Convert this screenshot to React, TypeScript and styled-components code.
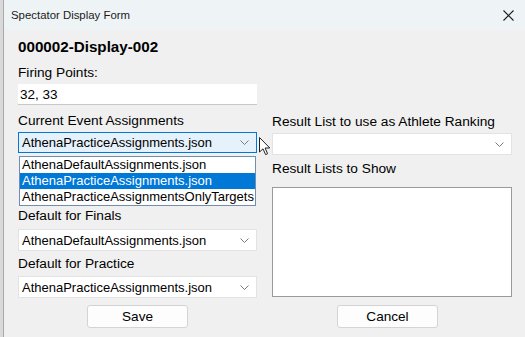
import React from 'react';
import styled, {createGlobalStyle} from 'styled-components';

const GlobalStyle = createGlobalStyle`
  html, body {
    margin: 0;
    padding: 0;
    background: #d9d9d9;
    font-family: "Liberation Sans", Arial, sans-serif;
  }
`;

const Window = styled.div`
  margin-left: 3px;
  width: 522px;
  height: 337px;
  background: #f0f0f0;
  border-left: 1px solid #a9a9a9;
  box-sizing: border-box;
  display: flex;
  flex-direction: column;
  overflow: hidden;
`;

const TitleBar = styled.div`
  height: 30px;
  flex-shrink: 0;
  background: #eef3f6;
  display: flex;
  align-items: center;
  justify-content: space-between;
  padding: 0 11px 0 7px;
  font-size: 11.4px;
  color: #1a1a1a;
`;

const Body = styled.div`
  padding: 8px 13px 0 14px;
  display: flex;
  flex-direction: column;
  color: #000;
  font-size: 13px;
`;

const Heading = styled.div`
  font-weight: bold;
  font-size: 15.2px;
  line-height: 18px;
  margin-bottom: 9px;
`;

const Label = styled.div<{$gap?: number}>`
  font-size: 13.7px;
  line-height: 16px;
  margin-bottom: ${p => p.$gap ?? 3}px;
`;

const TextBox = styled.div`
  width: 239px;
  height: 21px;
  box-sizing: border-box;
  background: #fff;
  border-bottom: 1px solid #c8c8c8;
  padding: 3px 2px;
  line-height: 15px;
  font-size: 13.5px;
  margin-bottom: 8px;
`;

const Columns = styled.div`
  display: grid;
  grid-template-columns: 239px 240px;
  column-gap: 15px;
`;

const Column = styled.div`
  display: flex;
  flex-direction: column;
  position: relative;
`;

const Combo = styled.div<{$active?: boolean; $height?: number}>`
  position: relative;
  height: ${p => p.$height ?? 22}px;
  box-sizing: border-box;
  background: ${p => (p.$active ? '#e5f1fb' : '#fff')};
  border: 1px solid ${p => (p.$active ? '#0078d7' : '#e3e3e3')};
  display: flex;
  align-items: center;
  justify-content: space-between;
  padding: 0 7px 0 3px;
  line-height: 15px;
`;

const DropList = styled.div`
  position: absolute;
  left: 0;
  right: 0;
  top: 23px;
  background: #fff;
  border: 1px solid #6f8fb0;
  z-index: 2;
`;

const DropItem = styled.div<{$selected?: boolean}>`
  height: 16px;
  line-height: 16px;
  padding: 0 2px;
  white-space: nowrap;
  background: ${p => (p.$selected ? '#0078d7' : 'transparent')};
  color: ${p => (p.$selected ? '#fff' : '#000')};
`;

const ListBox = styled.div`
  height: 110px;
  box-sizing: border-box;
  background: #fff;
  border: 1px solid #9a9a9a;
`;

const Buttons = styled.div`
  display: grid;
  grid-template-columns: 239px 240px;
  column-gap: 15px;
  margin-top: 7px;
`;

const Button = styled.div<{$offset?: number}>`
  justify-self: ${p => (p.$offset !== undefined ? 'start' : 'center')};
  margin-left: ${p => p.$offset ?? 0}px;
  width: 101px;
  height: 23px;
  box-sizing: border-box;
  background: #fdfdfd;
  border: 1px solid #d4d4d4;
  border-radius: 3px;
  display: flex;
  align-items: center;
  justify-content: center;
  font-size: 13.6px;
`;

const Cursor = styled.svg`
  position: absolute;
  left: 240px;
  top: 4px;
  z-index: 3;
`;

const Chevron = () => (
  <svg width="9" height="5" viewBox="0 0 9 5">
    <path d="M0.5 0.5 L4.5 4.5 L8.5 0.5" fill="none" stroke="#7a7a7a" strokeWidth="1" />
  </svg>
);

const CloseIcon = () => (
  <svg width="11" height="11" viewBox="0 0 11 11">
    <path d="M0.5 0.5 L10.5 10.5 M10.5 0.5 L0.5 10.5" stroke="#1a1a1a" strokeWidth="1.1" />
  </svg>
);

export default function App() {
  return (
    <>
      <GlobalStyle />
      <Window>
        <TitleBar>
          <span>Spectator Display Form</span>
          <CloseIcon />
        </TitleBar>
        <Body>
          <Heading>000002-Display-002</Heading>
          <Label>Firing Points:</Label>
          <TextBox>32, 33</TextBox>
          <Columns>
            <Column>
              <Label>Current Event Assignments</Label>
              <Combo $active $height={21}>
                <span>AthenaPracticeAssignments.json</span>
                <Chevron />
                <DropList>
                  <DropItem>AthenaDefaultAssignments.json</DropItem>
                  <DropItem $selected>AthenaPracticeAssignments.json</DropItem>
                  <DropItem>AthenaPracticeAssignmentsOnlyTargets</DropItem>
                </DropList>
                <Cursor width="12" height="19" viewBox="0 0 12 19">
                  <path d="M0.5 0.5 L0.5 15 L4 11.8 L6.6 17.6 L8.6 16.7 L6.1 11 L10.8 11 Z" fill="#fff" stroke="#222" strokeWidth="1" />
                </Cursor>
              </Combo>
              <Label style={{marginTop: 55}}>Default for Finals</Label>
              <Combo style={{marginTop: 2}}>
                <span>AthenaDefaultAssignments.json</span>
                <Chevron />
              </Combo>
              <Label style={{marginTop: 5}}>Default for Practice</Label>
              <Combo style={{marginTop: 1}}>
                <span>AthenaPracticeAssignments.json</span>
                <Chevron />
              </Combo>
            </Column>
            <Column>
              <Label style={{marginTop: 1}}>Result List to use as Athlete Ranking</Label>
              <Combo>
                <span />
                <Chevron />
              </Combo>
              <Label style={{marginTop: 6}} $gap={10}>Result Lists to Show</Label>
              <ListBox />
            </Column>
          </Columns>
          <Buttons>
            <Button>Save</Button>
            <Button $offset={65}>Cancel</Button>
          </Buttons>
        </Body>
      </Window>
    </>
  );
}
